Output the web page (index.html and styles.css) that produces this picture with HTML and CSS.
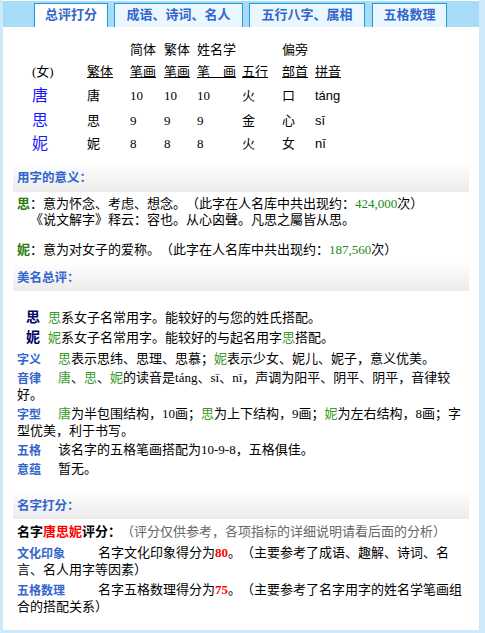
FILE: index.html
```html
<!DOCTYPE html>
<html lang="zh-CN">
<head>
<meta charset="utf-8">
<title>总评打分</title>
<link rel="stylesheet" href="styles.css">
</head>
<body>
<div class="page">
  <div class="tabs">
    <div class="tab t1">总评打分</div>
    <div class="tab t2">成语、诗词、名人</div>
    <div class="tab t3">五行八字、属相</div>
    <div class="tab t4">五格数理</div>
  </div>
  <div class="content">
    <div class="chars">
      <span></span><span></span><span>简体</span><span>繁体</span><span>姓名学</span><span></span><span>偏旁</span><span></span>
      <span>(女)</span><span class="u">繁体</span><span class="u">笔画</span><span class="u">笔画</span><span class="u">笔　画</span><span class="u">五行</span><span class="u">部首</span><span class="u">拼音</span>
      <span class="big">唐</span><span>唐</span><span>10</span><span>10</span><span>10</span><span>火</span><span>口</span><span class="py">táng</span>
      <span class="big">思</span><span>思</span><span>9</span><span>9</span><span>9</span><span>金</span><span>心</span><span class="py">sī</span>
      <span class="big">妮</span><span>妮</span><span>8</span><span>8</span><span>8</span><span>火</span><span>女</span><span class="py">nī</span>
    </div>

    <div class="head h1">用字的意义：</div>
    <div class="txt meaning">
      <p><b class="g1">思</b>：意为怀念、考虑、想念。（此字在人名库中共出现约：<span class="num">424,000</span>次）<br><span class="indent">《说文解字》释云：容也。从心囟聲。凡思之屬皆从思。</span></p>
      <p><b class="g1">妮</b>：意为对女子的爱称。（此字在人名库中共出现约：<span class="num">187,560</span>次）</p>
    </div>

    <div class="head">美名总评：</div>
    <div class="txt eval">
      <div class="eline"><b class="bigc">思</b><span class="g2">思</span>系女子名常用字。能较好的与您的姓氏搭配。</div>
      <div class="eline"><b class="bigc">妮</b><span class="g2">妮</span>系女子名常用字。能较好的与起名用字<span class="g2">思</span>搭配。</div>
      <div class="item"><span class="lbl">字义</span><span class="g2">思</span>表示思纬、思理、思慕；<span class="g2">妮</span>表示少女、妮儿、妮子，意义优美。</div>
      <div class="item"><span class="lbl">音律</span><span class="g2">唐</span>、<span class="g2">思</span>、<span class="g2">妮</span>的读音是táng、sī、nī，声调为阳平、阴平、阴平，音律较好。</div>
      <div class="item"><span class="lbl">字型</span><span class="g2">唐</span>为半包围结构，10画；<span class="g2">思</span>为上下结构，9画；<span class="g2">妮</span>为左右结构，8画；字型优美，利于书写。</div>
      <div class="item"><span class="lbl">五格</span>该名字的五格笔画搭配为10-9-8，五格俱佳。</div>
      <div class="item"><span class="lbl">意蕴</span>暂无。</div>
    </div>

    <div class="head h3">名字打分：</div>
    <div class="txt score">
      <div class="sline"><b>名字<span class="red">唐思妮</span>评分：</b><span class="gray">（评分仅供参考，各项指标的详细说明请看后面的分析）</span></div>
      <div class="item"><span class="lbl wide">文化印象</span>名字文化印象得分为<b class="pts">80</b>。（主要参考了成语、趣解、诗词、名言、名人用字等因素）</div>
      <div class="item"><span class="lbl wide">五格数理</span>名字五格数理得分为<b class="pts">75</b>。（主要参考了名字用字的姓名学笔画组合的搭配关系）</div>
    </div>
  </div>
</div>
</body>
</html>
```

FILE: styles.css
```css
body {
  margin: 0;
  background: #cfe9fb;
  font-family: "Liberation Serif", "Noto Sans CJK SC", serif;
  font-size: 13px;
  color: #000;
  text-spacing-trim: space-all;
}

.page {
  box-sizing: border-box;
  margin-left: 3px;
  width: 476px;
  height: 630px;
  padding-top: 1px;
  background: #fff;
}

.tabs {
  height: 26px;
  background: #a6dcf7;
  display: flex;
  align-items: flex-end;
  padding-left: 31px;
}

.tab {
  box-sizing: border-box;
  height: 24px;
  border: 1px solid #1f9ad6;
  border-bottom: 0;
  background: #eaf7fe;
  color: #3366cc;
  font-family: "Noto Sans CJK SC", sans-serif;
  font-weight: bold;
  font-size: 13px;
  line-height: 20px;
  text-align: center;
  margin-right: 6px;
}

.t1 { width: 74px; background: #fff; }
.t2 { width: 129px; }
.t3 { width: 116px; margin-right: 7px; }
.t4 { width: 75px; }

.content {
  padding: 0 10px;
}

.chars {
  display: grid;
  grid-template-columns: 55px 43px 34px 33px 45px 40px 33px 60px;
  grid-template-rows: 22px 22px 26px 23px 23px;
  align-items: center;
  margin: 12px 0 0 19px;
  line-height: 16px;
}

.u { text-decoration: underline; }

.big {
  color: #1a1aff;
  font-size: 16px;
}

.py { font-family: "Liberation Sans", sans-serif; }

.head {
  height: 29px;
  line-height: 29px;
  padding-left: 4px;
  background: linear-gradient(#ffffff, #ebebeb);
  color: #3366cc;
  font-family: "Noto Sans CJK SC", sans-serif;
  font-weight: bold;
  font-size: 12.5px;
}

.h1 {
  margin-top: 7px;
  height: 30px;
  line-height: 30px;
}

.h3 { margin-top: 13px; }

.txt {
  padding: 0 3px 0 4px;
}

.meaning {
  margin-top: 4px;
  margin-bottom: 4px;
  line-height: 16px;
}

.meaning p { margin: 0; }
.meaning p + p { margin-top: 14px; }

.indent { padding-left: 13px; }

.g1 { color: #2a7a0a; }
.num { color: #228b22; }
.g2 { color: #3c9a28; }

.eval { margin-top: 17px; }

.eline { line-height: 20px; }

.bigc {
  display: inline-block;
  margin-left: 9px;
  width: 22px;
  font-size: 14px;
  color: #000066;
}

.item {
  line-height: 17px;
  margin-top: 2px;
}

.lbl {
  display: inline-block;
  width: 41px;
  font-family: "Noto Sans CJK SC", sans-serif;
  font-size: 12px;
  line-height: 12px;
  font-weight: bold;
  color: #3366cc;
  vertical-align: -1px;
}

.lbl.wide { width: 81px; }

.score { margin-top: 4px; }

.sline { line-height: 18px; }

.red { color: #ff0000; }
.gray { color: #666; }

.pts { color: #ff0000; }

.score .item { margin-top: 3px; }
```
